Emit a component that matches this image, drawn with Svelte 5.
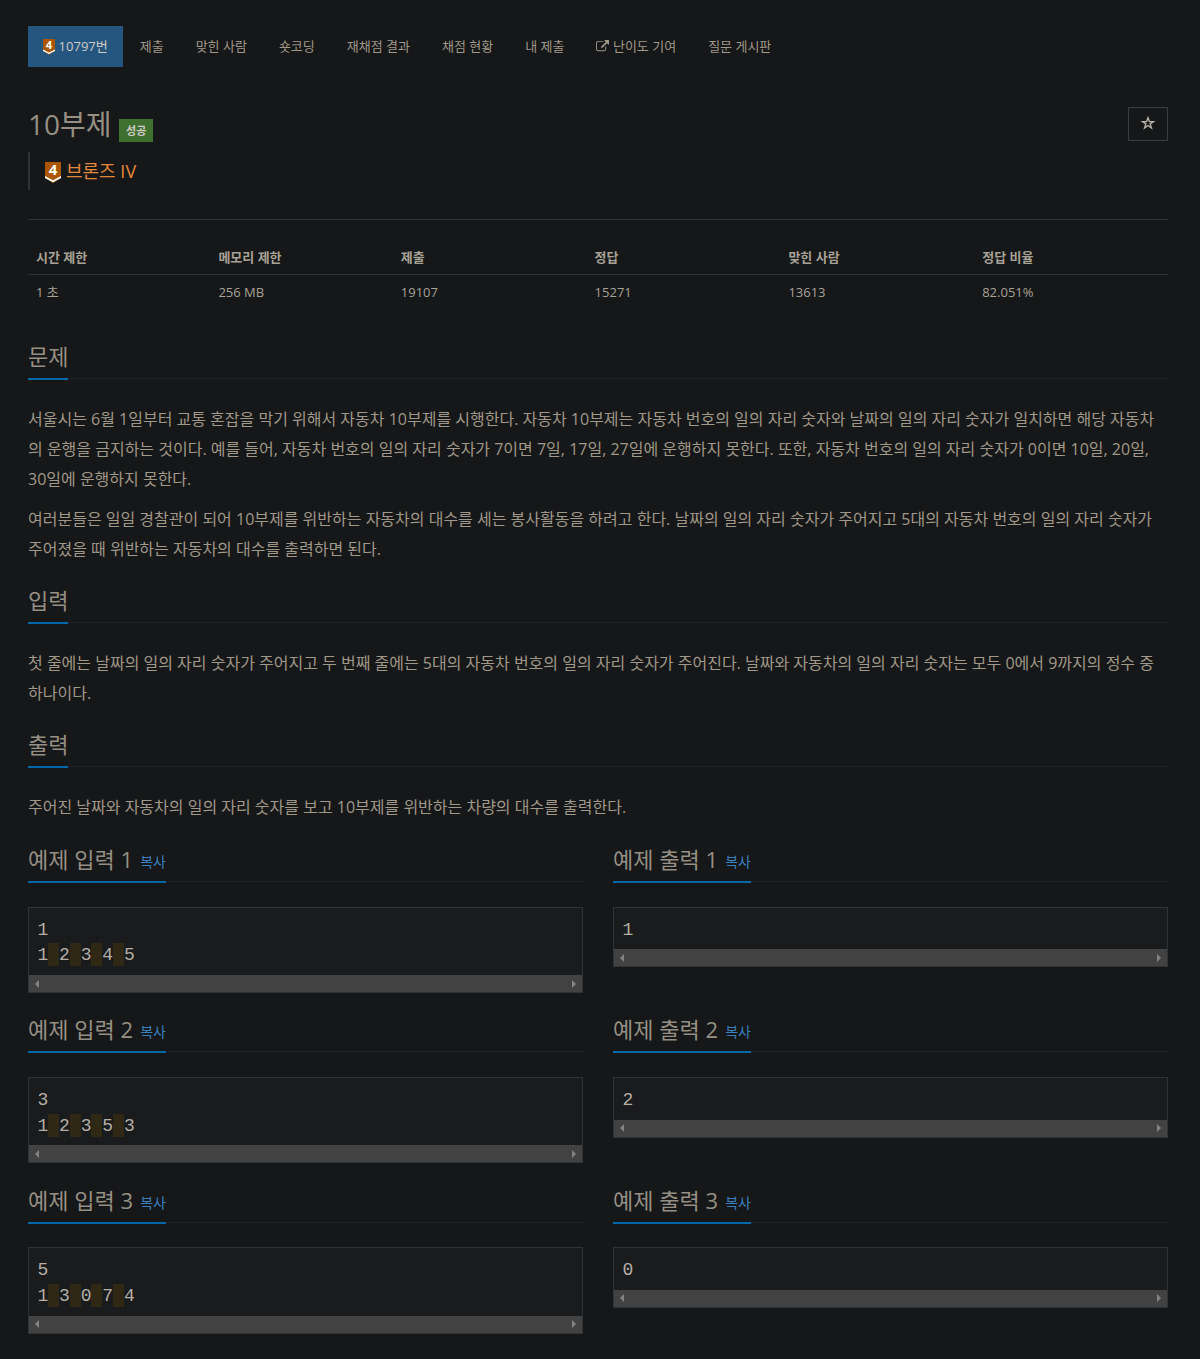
<script>
  const nav = ['제출', '맞힌 사람', '숏코딩', '재채점 결과', '채점 현황', '내 제출', '난이도 기여', '질문 게시판'];
  const stats = [
    ['시간 제한', '1 초'],
    ['메모리 제한', '256 MB'],
    ['제출', '19107'],
    ['정답', '15271'],
    ['맞힌 사람', '13613'],
    ['정답 비율', '82.051%']
  ];
  const sections = [
    {
      title: '문제',
      paragraphs: [
        '서울시는 6월 1일부터 교통 혼잡을 막기 위해서 자동차 10부제를 시행한다. 자동차 10부제는 자동차 번호의 일의 자리 숫자와 날짜의 일의 자리 숫자가 일치하면 해당 자동차의 운행을 금지하는 것이다. 예를 들어, 자동차 번호의 일의 자리 숫자가 7이면 7일, 17일, 27일에 운행하지 못한다. 또한, 자동차 번호의 일의 자리 숫자가 0이면 10일, 20일, 30일에 운행하지 못한다.',
        '여러분들은 일일 경찰관이 되어 10부제를 위반하는 자동차의 대수를 세는 봉사활동을 하려고 한다. 날짜의 일의 자리 숫자가 주어지고 5대의 자동차 번호의 일의 자리 숫자가 주어졌을 때 위반하는 자동차의 대수를 출력하면 된다.'
      ]
    },
    {
      title: '입력',
      paragraphs: [
        '첫 줄에는 날짜의 일의 자리 숫자가 주어지고 두 번째 줄에는 5대의 자동차 번호의 일의 자리 숫자가 주어진다. 날짜와 자동차의 일의 자리 숫자는 모두 0에서 9까지의 정수 중 하나이다.'
      ]
    },
    { title: '출력', paragraphs: ['주어진 날짜와 자동차의 일의 자리 숫자를 보고 10부제를 위반하는 차량의 대수를 출력한다.'] }
  ];
  const samples = [
    { first: '1', rest: ['1', '2', '3', '4', '5'], output: '1' },
    { first: '3', rest: ['1', '2', '3', '5', '3'], output: '2' },
    { first: '5', rest: ['1', '3', '0', '7', '4'], output: '0' }
  ];
</script>

{#snippet tier(cls)}
  <svg class={cls} viewBox="0 0 16 21" aria-hidden="true">
    <path d="M0 0H16V16L8 21L0 16Z" fill="#ad5600" />
    <path d="M0 14L8 18.200L16 14V16.100L8 20.200L0 16.100Z" fill="#fff" />
    <text x="8" y="13.300" text-anchor="middle">4</text>
  </svg>
{/snippet}

{#snippet scrollbar()}
  <div class="scrollbar">
    <svg viewBox="0 0 4 8"><path d="M4 0V8L0 4Z" /></svg>
    <svg viewBox="0 0 4 8"><path d="M0 0V8L4 4Z" /></svg>
  </div>
{/snippet}

<main>
  <nav>
    <a class="active" href="#problem">{@render tier('small')} 10797번</a>
    {#each nav as item}
      <a href="#menu">
        {#if item === '난이도 기여'}
          <svg class="external" viewBox="0 0 1792 1792" aria-hidden="true"><path d="M1408 928v320q0 119-84.500 203.500t-203.500 84.500h-832q-119 0-203.500-84.500t-84.500-203.500v-832q0-119 84.500-203.500t203.500-84.500h704q14 0 23 9t9 23v64q0 14-9 23t-23 9h-704q-66 0-113 47t-47 113v832q0 66 47 113t113 47h832q66 0 113-47t47-113v-320q0-14 9-23t23-9h64q14 0 23 9t9 23zm384-864v512q0 26-19 45t-45 19-45-19l-176-176-652 652q-10 10-23 10t-23-10l-114-114q-10-10-10-23t10-23l652-652-176-176q-19-19-19-45t19-45 45-19h512q26 0 45 19t19 45z" /></svg>
        {/if}{item}</a>
    {/each}
  </nav>

  <header>
    <div class="title">
      <h1>10부제</h1>
      <span class="label">성공</span>
      <button aria-label="즐겨찾기">
        <svg viewBox="0 0 14 14" aria-hidden="true"><path d="M7 1.800L8.400 5.600H12.400L9.200 7.900L10.400 11.900L7 9.500L3.600 11.900L4.800 7.900L1.600 5.600H5.600Z" /></svg>
      </button>
    </div>
    <blockquote>{@render tier('large')}<span>브론즈 IV</span></blockquote>
  </header>

  <table>
    <thead><tr>{#each stats as s}<th>{s[0]}</th>{/each}</tr></thead>
    <tbody><tr>{#each stats as s}<td>{s[1]}</td>{/each}</tr></tbody>
  </table>

  <div class="description">
    {#each sections as s}
      <section>
        <div class="headline"><h2>{s.title}</h2></div>
        <div class="text">{#each s.paragraphs as p}<p>{p}</p>{/each}</div>
      </section>
    {/each}
  </div>

  {#each samples as s, i}
    <div class="samples">
      <section>
        <div class="headline"><h2>예제 입력 {i + 1} <a href="#copy">복사</a></h2></div>
        <div class="box"><pre>{s.first}
{#each s.rest as n, k}{#if k}<mark>{' '}</mark>{/if}{n}{/each}</pre>{@render scrollbar()}</div>
      </section>
      <section>
        <div class="headline"><h2>예제 출력 {i + 1} <a href="#copy">복사</a></h2></div>
        <div class="box"><pre>{s.output}</pre>{@render scrollbar()}</div>
      </section>
    </div>
  {/each}
</main>

<style>
  :global(body) {
    margin: 0;
    background: #151718;
  }
  main {
    box-sizing: border-box;
    width: 1200px;
    height: 1359px;
    overflow: hidden;
    padding: 26px 32px 0 28px;
    background: #151718;
    color: #a8a296;
    font: 13px/20.8px 'Open Sans', 'Noto Sans CJK KR', sans-serif;
  }
  nav {
    display: flex;
    gap: 2px;
    height: 41px;
  }
  nav a {
    display: flex;
    align-items: center;
    box-sizing: border-box;
    height: 40px;
    padding: 0 15px;
    color: #a09889;
    text-decoration: none;
  }
  nav .active {
    height: 41px;
    padding-bottom: 1px;
    background: #255680;
    color: #d0ccc6;
  }
  .small {
    width: 12px;
    height: 15.700px;
    margin: 2px 3.600px 0 0;
  }
  .large {
    width: 16px;
    height: 21px;
    margin: 2px 5px 0 0;
  }
  svg {
    overflow: visible;
  }
  svg text {
    font: 700 15px/15px 'Open Sans', sans-serif;
    fill: #fff;
  }
  .external {
    width: 13px;
    height: 13px;
    margin-right: 3.500px;
    fill: currentColor;
  }
  header {
    height: 152px;
    border-bottom: 1px solid #303335;
  }
  .title {
    display: flex;
    height: 85px;
    padding-top: 40px;
    box-sizing: border-box;
  }
  h1 {
    margin: -1px 0 0;
    font-size: 28px;
    line-height: 36px;
    font-weight: 400;
    color: #968f84;
  }
  .label {
    height: 23px;
    margin: 12px 0 0 7px;
    padding: 0 6.500px 0 7.500px;
    background: #3f702f;
    color: #d0ccc6;
    font-size: 11px;
    font-weight: 700;
    line-height: 23px;
  }
  button {
    display: flex;
    align-items: center;
    justify-content: center;
    width: 40px;
    height: 34px;
    margin-left: auto;
    padding: 0 1px 2px 0;
    border: 1px solid #3b3e40;
    background: none;
  }
  button svg {
    width: 14px;
    height: 14px;
    fill: none;
    stroke: #b5afa6;
    stroke-width: 1.400;
  }
  blockquote {
    display: flex;
    align-items: center;
    height: 38px;
    margin: 0;
    padding-left: 15px;
    border-left: 2px solid #303335;
    color: #e3873c;
    font-size: 18px;
  }
  table {
    display: block;
    margin: 20px 0 30px;
  }
  thead,
  tbody {
    display: block;
  }
  tr {
    display: grid;
    grid-template-columns: 16% 16% repeat(4, 17%);
  }
  th,
  td {
    padding: 7px 8px 0;
    text-align: left;
  }
  th {
    height: 27px;
    border-bottom: 1px solid #303335;
  }
  td {
    height: 28px;
  }
  .headline {
    height: 38px;
    border-bottom: 1px dotted #272c35;
  }
  h2 {
    box-sizing: border-box;
    display: inline-block;
    height: 40px;
    margin: 0;
    border-bottom: 2px solid #0067a8;
    color: #968f84;
    font-size: 22px;
    line-height: 33px;
    font-weight: 400;
  }
  h2 a {
    position: relative;
    top: -1px;
    margin-left: 1.500px;
    color: #3a80bf;
    font-size: 14px;
    text-decoration: none;
  }
  .description {
    height: 503px;
  }
  .text {
    padding: 25px 0 20px;
    font-size: 16px;
    line-height: 30px;
    color: #a09889;
  }
  p {
    margin: 0;
  }
  p + p {
    margin-top: 10px;
  }
  .samples {
    display: grid;
    grid-template-columns: 555px 555px;
    gap: 30px;
    height: 170.300px;
  }
  .box {
    margin-top: 24.600px;
    border: 1px solid #303335;
    background: #191b1c;
    color: #b5afa6;
  }
  pre {
    margin: 0;
    padding: 10px 8px 6px 8.400px;
    font: 18px/25.700px 'Liberation Mono', monospace;
  }
  mark {
    padding: 2px 0 1px;
    background: #2f2815;
  }
  .scrollbar {
    display: flex;
    align-items: center;
    justify-content: space-between;
    height: 17px;
    padding: 0 6px;
    background: #424242;
  }
  .scrollbar svg {
    width: 4px;
    height: 8px;
    fill: #848484;
  }
</style>
